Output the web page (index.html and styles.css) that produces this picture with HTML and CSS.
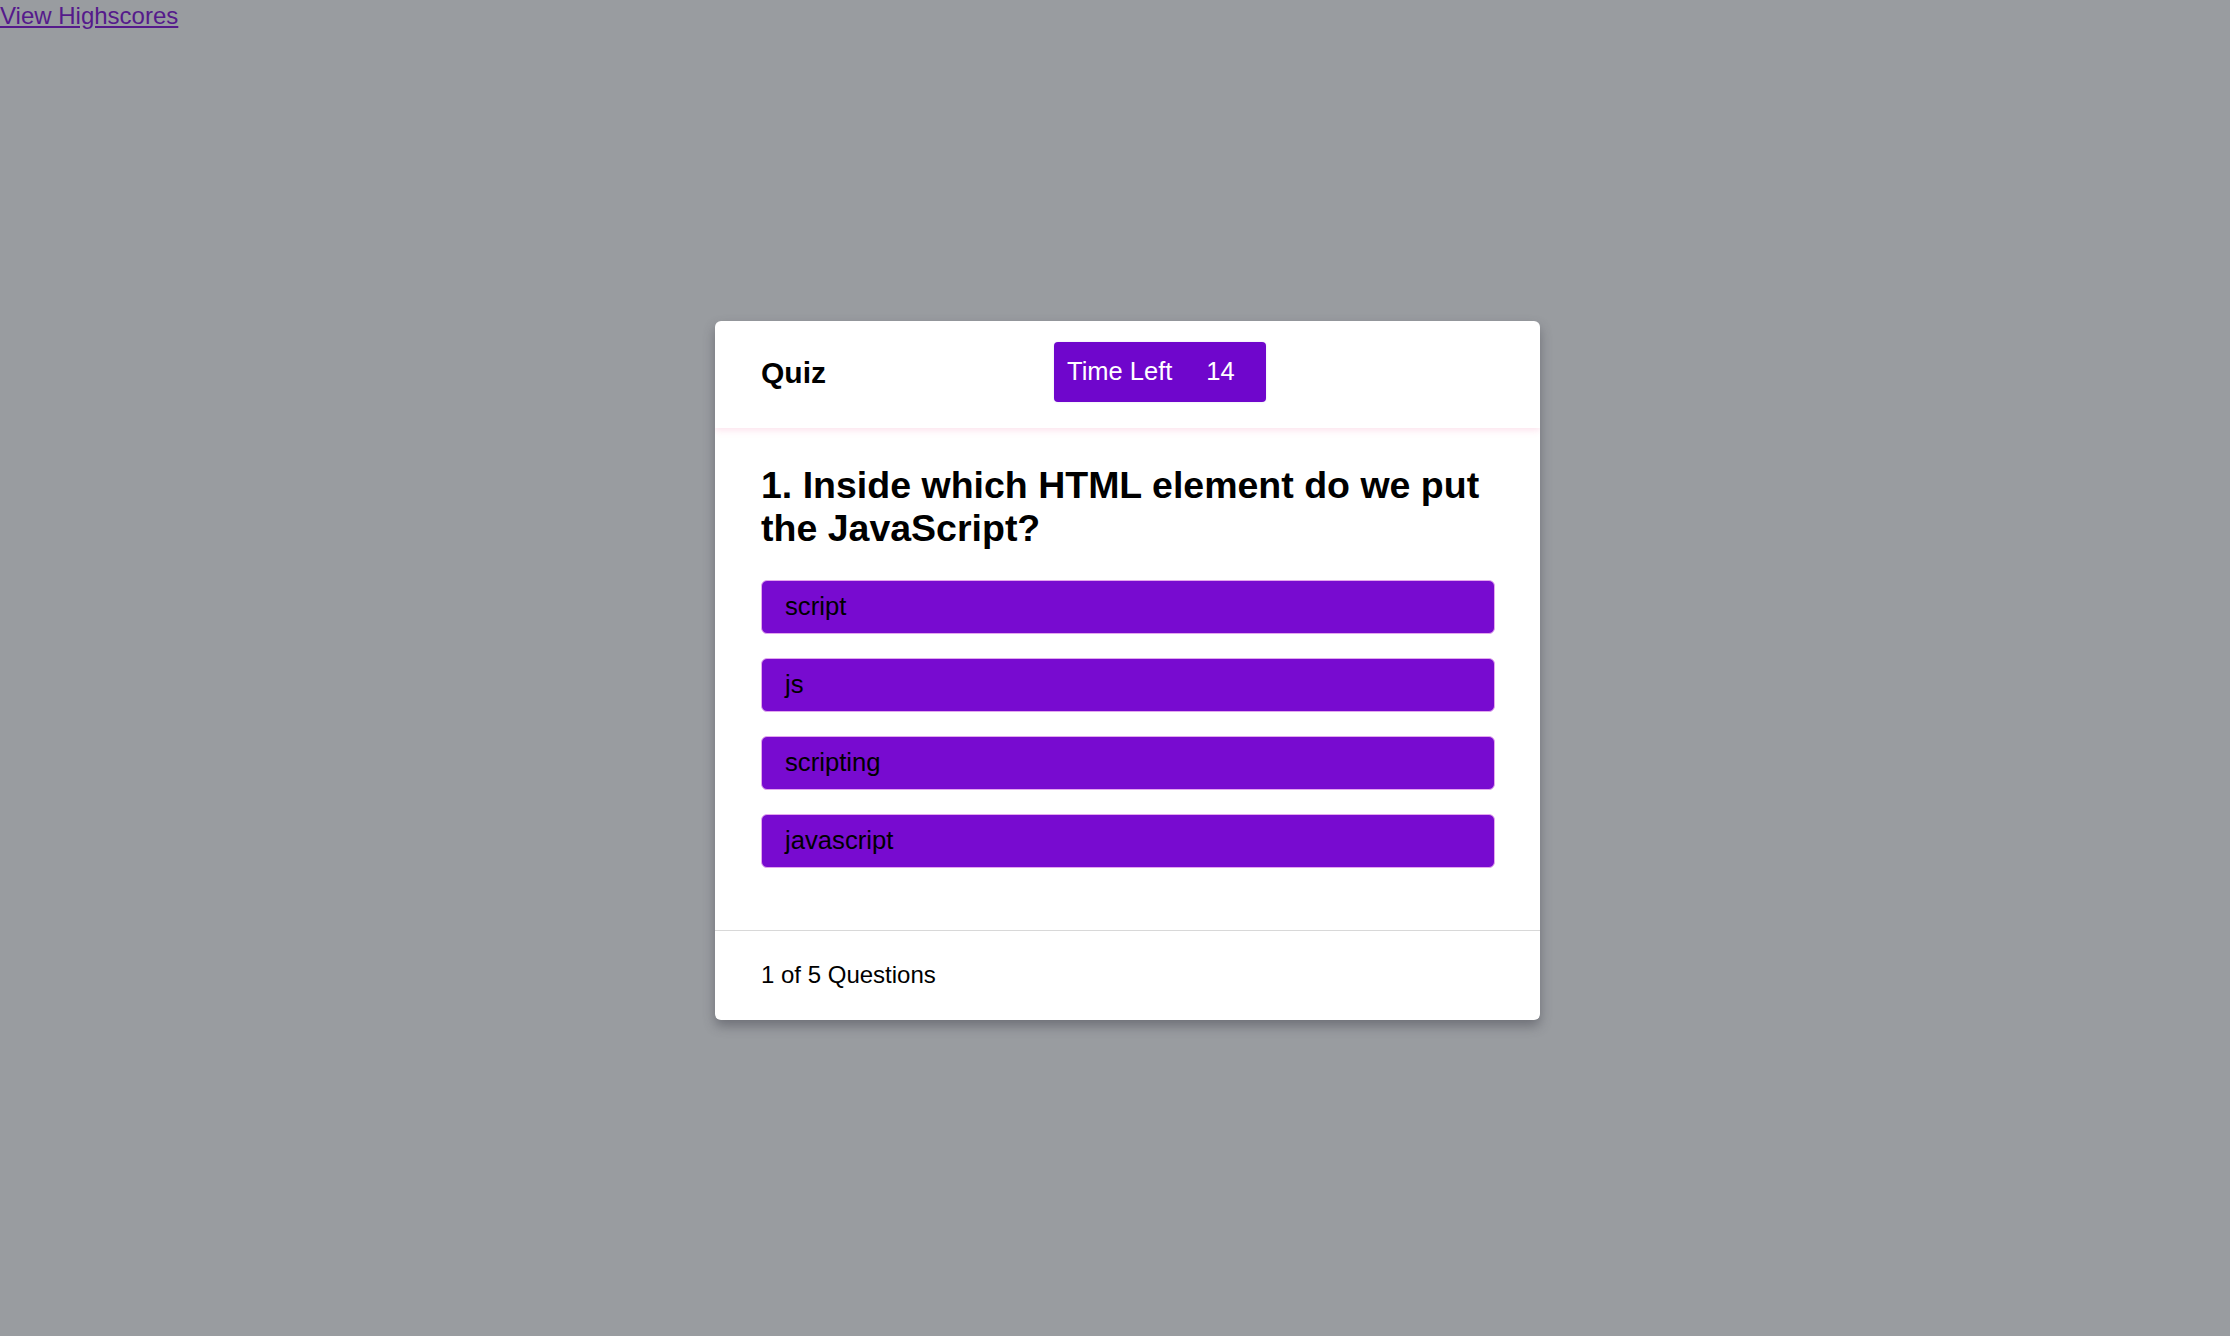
FILE: index.html
```html
<!DOCTYPE html>
<html lang="en">
<head>
<meta charset="utf-8">
<title>Quiz</title>
<link rel="stylesheet" href="styles.css">
</head>
<body>
<a class="highscores" href="#">View Highscores</a>
<main class="stage">
  <section class="card">
    <header class="card-header">
      <h1 class="title">Quiz</h1>
      <div class="timer"><span>Time Left</span><span class="timer-value">14</span></div>
    </header>
    <div class="card-body">
      <h2 class="question">1. Inside which HTML element do we put the JavaScript?</h2>
      <ul class="options">
        <li><button class="option">script</button></li>
        <li><button class="option">js</button></li>
        <li><button class="option">scripting</button></li>
        <li><button class="option">javascript</button></li>
      </ul>
    </div>
    <footer class="card-footer">1 of 5 Questions</footer>
  </section>
</main>
</body>
</html>
```

FILE: styles.css
```css
html, body {
  margin: 0;
  padding: 0;
  height: 100%;
}
body {
  background: #999ca0;
  font-family: "Liberation Sans", Arial, sans-serif;
  color: #000;
  position: relative;
}
.highscores {
  position: absolute;
  left: 0;
  top: 0;
  font-size: 24px;
  line-height: 31px;
  color: #551a8b;
  text-decoration: underline;
}
.stage {
  box-sizing: border-box;
  height: 100%;
  display: flex;
  align-items: center;
  justify-content: center;
  padding: 4px 0 0 25px;
}
.card {
  width: 825px;
  background: #fff;
  border-radius: 6px;
  box-shadow: 0 6px 12px rgba(60, 60, 70, 0.45);
  overflow: hidden;
}
.card-header {
  display: grid;
  grid-template-columns: 293px auto;
  align-items: center;
  padding: 21px 46px 26px;
  height: 107px;
  box-sizing: border-box;
  box-shadow: 0 3px 6px rgba(250, 200, 220, 0.45);
  position: relative;
}
.title {
  margin: 2px 0 0;
  font-size: 30px;
  font-weight: bold;
}
.timer {
  justify-self: start;
  display: flex;
  align-items: center;
  gap: 34px;
  width: 212px;
  height: 60px;
  box-sizing: border-box;
  padding: 0 13px;
  background: #6f06cc;
  color: #fff;
  border-radius: 4px;
  font-size: 25.5px;
  box-shadow: 0 0 2px rgba(200, 200, 230, 0.6);
}
.card-body {
  padding: 36px 45px 62px 46px;
}
.question {
  margin: 0 0 30px;
  font-size: 37.5px;
  line-height: 43px;
  font-weight: bold;
}
.options {
  list-style: none;
  margin: 0;
  padding: 0;
  display: flex;
  flex-direction: column;
  gap: 24px;
}
.option {
  display: block;
  width: 100%;
  height: 54px;
  box-sizing: border-box;
  text-align: left;
  padding: 0 23px;
  background: #780bd0;
  color: #000;
  border: 1px solid #e3a6ee;
  border-radius: 6px;
  font-family: "Liberation Sans", Arial, sans-serif;
  font-size: 25.7px;
  cursor: pointer;
}
.card-footer {
  border-top: 1px solid #d8d8d8;
  height: 90px;
  box-sizing: border-box;
  display: flex;
  align-items: center;
  padding: 0 46px;
  font-size: 24px;
}
```
